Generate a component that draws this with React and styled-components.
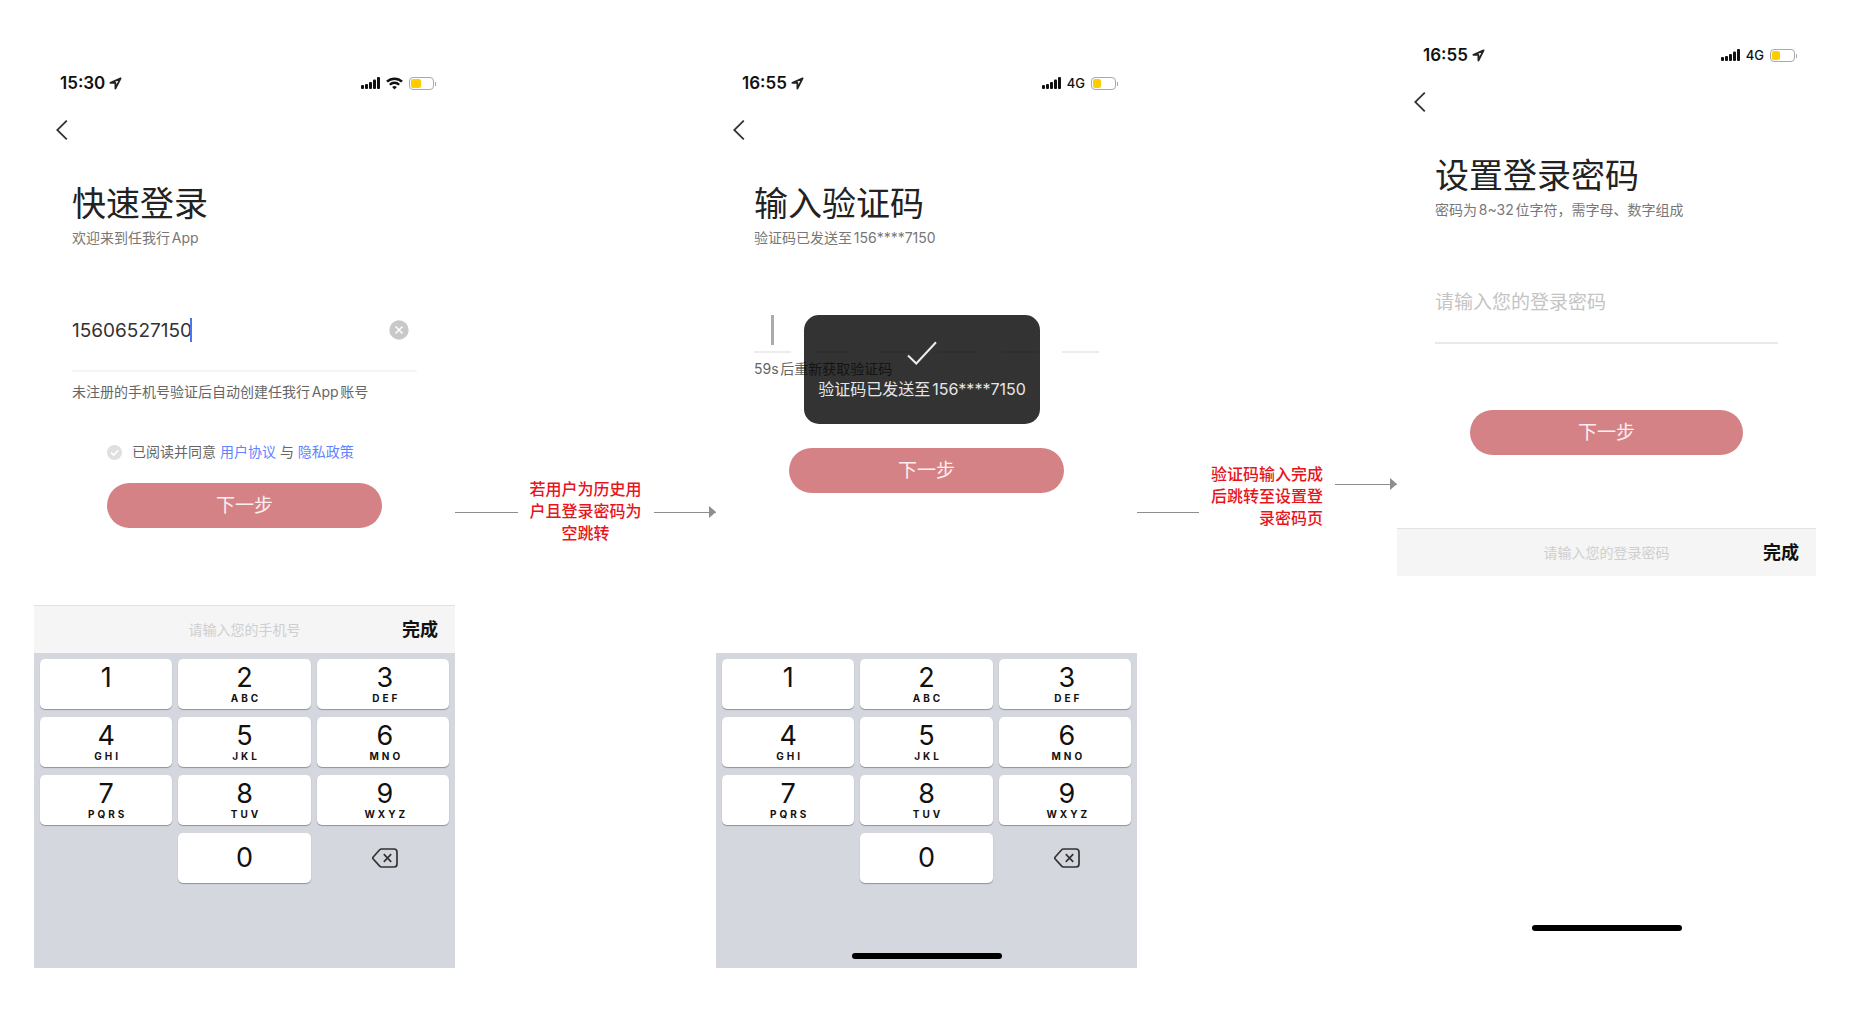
import React from "react";
import styled, { createGlobalStyle } from "styled-components";

const GlobalStyle = createGlobalStyle`
  *, *::before, *::after { box-sizing: border-box; }
  body {
    margin: 0;
    background: #fff;
    color: #333;
    font-family: Inter, "Noto Sans CJK SC", sans-serif;
    text-autospace: normal;
  }
  button, input { font: inherit; color: inherit; margin: 0; padding: 0; border: 0; background: none; outline: none; }
  button { cursor: pointer; }
  h1, p { margin: 0; font-weight: 400; }
`;

const Board = styled.main`
  display: grid;
  grid-template-columns: 421fr 261fr 421fr 260fr 419fr;
  align-items: start;
  padding: 40px 50px 40px 34px;
`;

const Phone = styled.section`
  display: flex;
  flex-direction: column;
  padding-top: ${(p) => (p.$raised ? 0 : 28)}px;
`;

const StatusBar = styled.div`
  display: flex;
  align-items: center;
  justify-content: space-between;
  height: 30px;
  padding: 0 18px 0 26px;
  color: #111;
`;

const StatusGroup = styled.div`
  display: flex;
  align-items: center;
  gap: ${(p) => p.$gap}px;
  font-size: ${(p) => p.$size}px;
  font-weight: ${(p) => p.$weight};
  line-height: 20px;
`;

const Battery = styled.span`
  position: relative;
  display: block;
  width: 25px;
  height: 13px;
  margin-right: 3px;
  padding: 1px;
  border: 1px solid #a9a9a9;
  border-radius: 4px;
  &::before {
    content: "";
    display: block;
    width: ${(p) => p.$level}px;
    height: 9px;
    border-radius: 2px;
    background: #ffcc00;
  }
  &::after {
    content: "";
    position: absolute;
    top: 4px;
    right: -3px;
    width: 1px;
    height: 4px;
    background: #a9a9a9;
  }
`;

const NavBar = styled.nav`
  display: flex;
  align-items: center;
  height: 64px;
  padding-left: ${(p) => p.$inset}px;
`;

const BackButton = styled.button`
  display: flex;
  color: #333;
`;

const Body = styled.div`
  padding: 22px 38px 0;
`;

const Title = styled.h1`
  font-size: 34px;
  line-height: 40px;
  color: #222;
`;

const Note = styled.p`
  margin-top: ${(p) => p.$top}px;
  font-size: 14px;
  line-height: 20px;
  color: ${(p) => (p.$dark ? "#666" : "#777")};
  white-space: nowrap;
`;

const Field = styled.div`
  display: flex;
  align-items: center;
  height: 82px;
  margin-top: 42px;
  border-bottom: 2px solid ${(p) => p.$line};
  font-size: 19px;
`;

const FieldInput = styled.input`
  flex: ${(p) => (p.$fit ? "none" : 1)};
  field-sizing: ${(p) => (p.$fit ? "content" : "fixed")};
  min-width: 0;
  height: 28px;
  &::placeholder { color: #c4c4c4; opacity: 1; }
`;

const Caret = styled.span`
  width: 2px;
  height: 24px;
  margin-left: -2px;
  background: #4a74f5;
`;

const ClearButton = styled.button`
  display: flex;
  margin-left: auto;
  margin-right: 8px;
`;

const Agreement = styled.div`
  display: flex;
  align-items: center;
  gap: 10px;
  margin-top: 40px;
  padding-left: 35px;
  font-size: 14px;
  line-height: 20px;
  color: #666;
  white-space: nowrap;
`;

const Tick = styled.span`
  display: grid;
  width: 15px;
  height: 15px;
  > * { grid-area: 1 / 1; }
`;

const TickBox = styled.input`
  appearance: none;
  width: 15px;
  height: 15px;
  border-radius: 50%;
  background: #dfdfdf;
`;

const TextLink = styled.a`
  color: #6183ff;
  text-decoration: none;
`;

const NextButton = styled.button`
  display: block;
  width: calc(100% - 70px);
  height: 45px;
  margin: ${(p) => p.$top}px auto 0;
  border-radius: 23px;
  background: #d58287;
  color: #fbeff0;
  font-size: 19px;
  line-height: 28px;
`;

const CodeArea = styled.div`
  position: relative;
  margin-top: 62px;
`;

const CodeRow = styled.div`
  display: flex;
  gap: 25px;
`;

const CodeCell = styled.div`
  display: flex;
  align-items: center;
  justify-content: center;
  flex: 1;
  height: 43px;
  padding-bottom: 3px;
  border-bottom: 2px solid #ececec;
  > * { min-width: 0; }
`;

const CodeInput = styled.input`
  width: 100%;
  text-align: center;
  font-size: 19px;
`;

const CodeCaret = styled.span`
  position: absolute;
  top: 5px;
  width: 3px;
  height: 30px;
  background: #ababab;
`;

const Toast = styled.div`
  position: absolute;
  top: 5px;
  left: 50px;
  display: flex;
  flex-direction: column;
  align-items: center;
  gap: 12px;
  width: 236px;
  height: 109px;
  padding-top: 26px;
  border-radius: 15px;
  background: rgba(0, 0, 0, 0.8);
  color: #e6e6e6;
  font-size: 16px;
  line-height: 24px;
  white-space: nowrap;
`;

const InputBar = styled.div`
  display: grid;
  grid-template-columns: 1fr auto 1fr;
  align-items: center;
  height: 48px;
  margin-top: ${(p) => p.$top}px;
  padding: 0 17px;
  border-top: 1px solid #e2e2e2;
  background: #f5f5f5;
`;

const InputBarHint = styled.span`
  grid-column: 2;
  font-size: 14px;
  line-height: 20px;
  color: #cfcfcf;
`;

const DoneButton = styled.button`
  justify-self: end;
  font-size: 18px;
  font-weight: 700;
  line-height: 28px;
  color: #111;
`;

const Keyboard = styled.div`
  margin-top: ${(p) => p.$top}px;
  padding: 6px 6px 0;
  background: #d4d7dd;
`;

const Keys = styled.div`
  display: grid;
  grid-template-columns: repeat(3, 1fr);
  grid-auto-rows: 50px;
  gap: 8px 6px;
`;

const Key = styled.button`
  display: flex;
  flex-direction: column;
  align-items: center;
  justify-content: center;
  border-radius: 5px;
  background: #fff;
  box-shadow: 0 1px 1px #8f9297;
  color: #111;
  font-size: 27px;
  line-height: 28px;
  &:nth-child(3n) { padding-left: 4px; }
`;

const KeyLetters = styled.span`
  height: 12px;
  padding-left: 3px;
  font-size: 10px;
  font-weight: 700;
  line-height: 12px;
  letter-spacing: 3px;
`;

const EraseKey = styled.button`
  grid-column: 3;
  display: flex;
  align-items: center;
  justify-content: center;
  padding-left: 4px;
  color: #333;
`;

const KeyboardFoot = styled.div`
  display: flex;
  align-items: flex-end;
  justify-content: center;
  height: 85px;
  padding-bottom: 9px;
`;

const HomeBar = styled.span`
  display: block;
  width: 150px;
  height: 6px;
  border-radius: 3px;
  background: #000;
`;

const HomeArea = styled.div`
  display: flex;
  justify-content: center;
  margin-top: 349px;
`;

const Connector = styled.div`
  display: flex;
  align-items: flex-start;
  gap: 12px;
  padding-top: ${(p) => p.$top}px;
`;

const Wire = styled.span`
  position: relative;
  flex: 1;
  height: 1px;
  margin-top: ${(p) => p.$drop}px;
  background: #8e8e8e;
`;

const Head = styled.span`
  position: absolute;
  right: 0;
  top: -6px;
  border: solid transparent;
  border-width: 6px 0 6px 7px;
  border-left-color: #8e8e8e;
`;

const WireLabel = styled.p`
  width: 112px;
  font-size: 16px;
  font-weight: 500;
  line-height: 22px;
  color: #e8141c;
  text-align: ${(p) => p.$align};
`;

const LocationIcon = () => (
  <svg width="13" height="13" viewBox="0 0 13 13" fill="none" aria-hidden="true">
    <path d="M11.600 1.400 1.400 5.900h5v5.600z" stroke="#222" strokeWidth="1.800" strokeLinejoin="round" />
  </svg>
);

const SignalIcon = () => (
  <svg width="19" height="12" viewBox="0 0 19 12" fill="#111" aria-hidden="true">
    <rect x="0" y="8" width="3" height="4" rx="1" />
    <rect x="4" y="7" width="3" height="5" rx="1" />
    <rect x="8" y="5" width="3" height="7" rx="1" />
    <rect x="12" y="2.500" width="3" height="9.500" rx="1" />
    <rect x="16" y="0" width="3" height="12" rx="1" />
  </svg>
);

const WifiIcon = () => (
  <svg width="17" height="13" viewBox="0 0 17 13" fill="none" stroke="#111" aria-hidden="true">
    <path d="M1 4.700a10.700 10.700 0 0 1 15 0" strokeWidth="2.500" />
    <path d="M3.800 7.700a6.700 6.700 0 0 1 9.400 0" strokeWidth="2.300" />
    <path d="M8.500 12.600 6.100 10.100a3.500 3.500 0 0 1 4.800 0z" fill="#111" stroke="none" />
  </svg>
);

const BackIcon = () => (
  <svg width="12" height="20" viewBox="0 0 12 20" fill="none" aria-hidden="true">
    <path d="M10.800 0.600 1.200 10l9.600 9.400" stroke="currentColor" strokeWidth="1.800" />
  </svg>
);

const ClearIcon = () => (
  <svg width="20" height="20" viewBox="0 0 20 20" aria-hidden="true">
    <circle cx="10" cy="10" r="9.700" fill="#c8c8c8" />
    <path d="M6.500 6.500l7 7M13.500 6.500l-7 7" stroke="#fff" strokeWidth="1.500" />
  </svg>
);

const TickIcon = () => (
  <svg width="15" height="15" viewBox="0 0 15 15" fill="none" pointerEvents="none" aria-hidden="true">
    <path d="M4 7.600l2.500 2.500 4.700-4.700" stroke="#fff" strokeWidth="1.500" />
  </svg>
);

const CheckIcon = () => (
  <svg width="30" height="24" viewBox="0 0 30 24" fill="none" aria-hidden="true">
    <path d="M1 14.500l8.300 8L29 1.200" stroke="#ececec" strokeWidth="2" />
  </svg>
);

const EraseIcon = () => (
  <svg width="26" height="20" viewBox="0 0 26 20" fill="none" stroke="currentColor" strokeWidth="1.700" strokeLinejoin="round" aria-hidden="true">
    <path d="M9.500 1H22a3 3 0 0 1 3 3v12a3 3 0 0 1-3 3H9.500a2.500 2.500 0 0 1-1.800-.8L1 10.800a1.200 1.200 0 0 1 0-1.600l6.700-7.400A2.500 2.500 0 0 1 9.500 1z" />
    <path d="M11.800 6.200l7.400 7.600M19.200 6.200l-7.400 7.600" />
  </svg>
);

function PhoneTop({ time, network, level, inset }) {
  return (
    <>
      <StatusBar>
        <StatusGroup $gap={4} $size={17} $weight={600}>
          <span>{time}</span>
          <LocationIcon />
        </StatusGroup>
        <StatusGroup $gap={6} $size={13} $weight={500}>
          <SignalIcon />
          {network ? <span>{network}</span> : <WifiIcon />}
          <Battery $level={level} />
        </StatusGroup>
      </StatusBar>
      <NavBar $inset={inset}>
        <BackButton type="button" aria-label="返回">
          <BackIcon />
        </BackButton>
      </NavBar>
    </>
  );
}

const KEYS = [
  ["1", ""],
  ["2", "ABC"],
  ["3", "DEF"],
  ["4", "GHI"],
  ["5", "JKL"],
  ["6", "MNO"],
  ["7", "PQRS"],
  ["8", "TUV"],
  ["9", "WXYZ"],
];

const ZeroKey = styled(Key)`
  grid-column: 2;
`;

function NumberPad({ top, home }) {
  return (
    <Keyboard $top={top}>
      <Keys>
        {KEYS.map(([digit, letters]) => (
          <Key type="button" key={digit}>
            {digit}
            <KeyLetters>{letters}</KeyLetters>
          </Key>
        ))}
        <ZeroKey type="button">0</ZeroKey>
        <EraseKey type="button" aria-label="删除">
          <EraseIcon />
        </EraseKey>
      </Keys>
      <KeyboardFoot>{home && <HomeBar />}</KeyboardFoot>
    </Keyboard>
  );
}

function LoginPhone() {
  return (
    <Phone>
      <PhoneTop time="15:30" level={10} inset={22} />
      <Body>
        <Title>快速登录</Title>
        <Note $top={4}>欢迎来到任我行App</Note>
        <Field $line="#f5f5f5">
          <FieldInput $fit type="tel" aria-label="手机号" defaultValue="15606527150" />
          <Caret />
          <ClearButton type="button" aria-label="清除">
            <ClearIcon />
          </ClearButton>
        </Field>
        <Note $top={10} $dark>未注册的手机号验证后自动创建任我行App账号</Note>
        <Agreement>
          <Tick>
            <TickBox type="checkbox" id="agree" />
            <TickIcon />
          </Tick>
          <label htmlFor="agree">
            已阅读并同意 <TextLink href="#terms">用户协议</TextLink> 与{" "}
            <TextLink href="#privacy">隐私政策</TextLink>
          </label>
        </Agreement>
        <NextButton type="button" $top={21}>下一步</NextButton>
      </Body>
      <InputBar $top={77}>
        <InputBarHint>请输入您的手机号</InputBarHint>
        <DoneButton type="button">完成</DoneButton>
      </InputBar>
      <NumberPad top={0} />
    </Phone>
  );
}

function CodePhone() {
  return (
    <Phone>
      <PhoneTop time="16:55" network="4G" level={8} inset={17} />
      <Body>
        <Title>输入验证码</Title>
        <Note $top={4}>验证码已发送至156****7150</Note>
        <CodeArea>
          <CodeRow>
            {[1, 2, 3, 4, 5, 6].map((n) => (
              <CodeCell key={n}>
                <CodeInput inputMode="numeric" maxLength={1} aria-label={`验证码第${n}位`} />
                {n === 1 && <CodeCaret />}
              </CodeCell>
            ))}
          </CodeRow>
          <Note $top={6} $dark>59s后重新获取验证码</Note>
          <Toast role="status">
            <CheckIcon />
            <span>验证码已发送至156****7150</span>
          </Toast>
        </CodeArea>
        <NextButton type="button" $top={69}>下一步</NextButton>
      </Body>
      <NumberPad top={160} home />
    </Phone>
  );
}

function PasswordPhone() {
  return (
    <Phone $raised>
      <PhoneTop time="16:55" network="4G" level={8} inset={17} />
      <Body>
        <Title>设置登录密码</Title>
        <Note $top={4}>密码为8~32位字符，需字母、数字组成</Note>
        <Field $line="#e9e9e9">
          <FieldInput type="password" aria-label="登录密码" placeholder="请输入您的登录密码" />
        </Field>
        <NextButton type="button" $top={66}>下一步</NextButton>
      </Body>
      <InputBar $top={73}>
        <InputBarHint>请输入您的登录密码</InputBarHint>
        <DoneButton type="button">完成</DoneButton>
      </InputBar>
      <HomeArea>
        <HomeBar />
      </HomeArea>
    </Phone>
  );
}

export default function App() {
  return (
    <>
      <GlobalStyle />
      <Board>
        <LoginPhone />
        <Connector $top={438}>
          <Wire $drop={34} />
          <WireLabel $align="center">若用户为历史用户且登录密码为空跳转</WireLabel>
          <Wire $drop={34}>
            <Head />
          </Wire>
        </Connector>
        <CodePhone />
        <Connector $top={423}>
          <Wire $drop={49} />
          <WireLabel $align="right">验证码输入完成后跳转至设置登录密码页</WireLabel>
          <Wire $drop={21}>
            <Head />
          </Wire>
        </Connector>
        <PasswordPhone />
      </Board>
    </>
  );
}
